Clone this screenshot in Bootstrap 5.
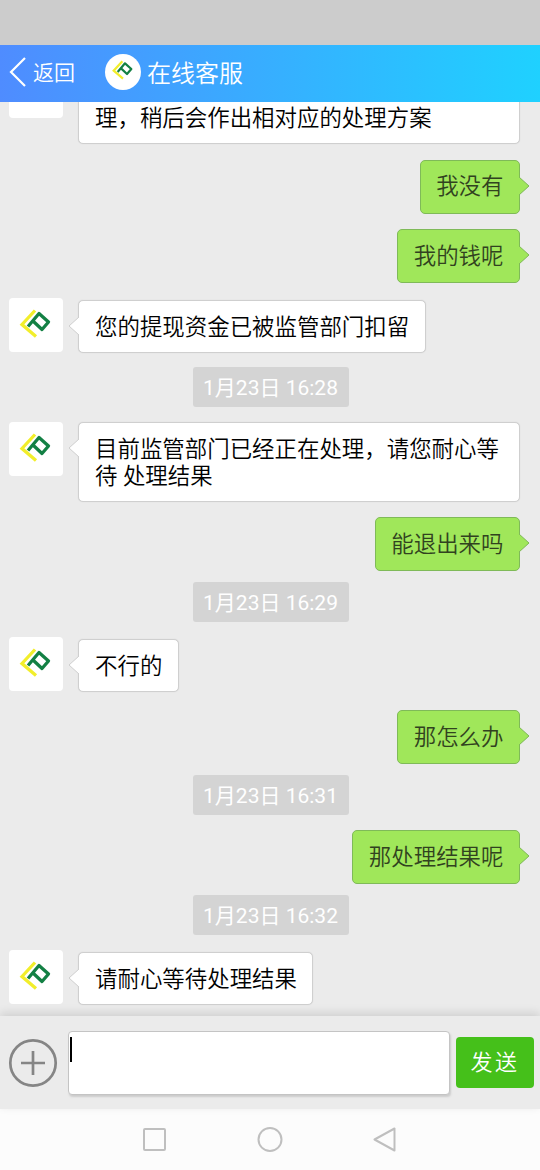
<!DOCTYPE html>
<html lang="zh-CN">
<head>
<meta charset="utf-8">
<meta name="viewport" content="width=device-width, initial-scale=1">
<title>在线客服</title>
<link href="https://cdn.jsdelivr.net/npm/bootstrap@5.3.0/dist/css/bootstrap.min.css" rel="stylesheet">
<style>
body{font-family:Roboto,"Noto Sans CJK SC",sans-serif;font-size:22.45px;font-weight:350;line-height:27px;background:#ebebeb;color:#000}
.status-strip{height:45px;background:#ccc}
.chat-head{height:57px;background:linear-gradient(90deg,#4f8cff,#1fd1ff);color:#fff;padding-left:9px}
.chat-head .back-arrow{margin-top:-3px}
.chat-head .back-label{font-size:21px;margin-left:7px}
.chat-head .head-logo{width:36px;height:36px;margin:-3px 0 0 30px}
.chat-head .head-title{font-size:24px;margin:1px 0 0 6px}
.chat-log{padding:0 20px 10.9px 9px;min-height:0}
.msg{flex:none}
.avatar{width:54px;height:54px;margin:-2.5px 15px -1px 0;border-radius:4px;background:#fff;flex:none}
.two-line .avatar{margin-top:-.5px}
.first .avatar{margin-top:-27.5px}
.bubble{position:relative;padding:12.5px 16px 11.5px;border:1px solid #cfcfcf;border-radius:5px;background:#fff;box-shadow:0 0 1px #ccc}
.theirs .bubble{padding-right:15.5px}
.mine .bubble{padding:12.8px 15.5px 12.2px;background:#a0e75a;border-color:#7fba58;color:#31421f;box-shadow:none}
.tail{position:absolute;top:15px;width:12px;height:20px}
.theirs .tail{left:-11px}
.mine .tail{right:-11px}
.stamp{flex:none;width:156px;height:40px;background:#d4d4d4;color:#fff;border-radius:3px;font-size:21px;font-weight:400;margin-left:12px;padding-top:3px}
.msg.mine{margin-top:15.2px}
.msg.theirs{margin-top:17.5px}
.stamp + .theirs.two-line{margin-top:15.5px}
.short + .mine{margin-top:18px}
.theirs + .stamp{margin-top:13.5px}
.mine + .stamp{margin-top:10.5px}
.composer{position:relative;height:93px;padding:0 6px 0 8px;box-shadow:0 -3px 9px rgba(0,0,0,.12);background:#ebebeb}
.entry{height:64px;margin:1px 6px 0 10px;padding:5px 1px;border:1px solid #c4c4c4;border-radius:4px;background:#fff;box-shadow:1px 2px 2px #ccc}
.caret{width:2px;height:25px;background:#000}
.send,.send:hover{width:78px;height:51px;background:#45c01a;color:#fff;font-size:22px;font-weight:350;letter-spacing:2.5px;border-radius:4px;padding:0;border:0}
.sys-nav{height:61px;background:#fcfcfc}
</style>
</head>
<body>
<svg class="d-none" xmlns="http://www.w3.org/2000/svg">
  <symbol id="logo" viewBox="0 0 54 54"><path d="M26 12.500 13 26.500 27 38.500" fill="none" stroke="#f2ee2b" stroke-width="3.300"/><path d="M19 28.500 30 15.500 39.500 24 33 31.500 24.500 23.500" fill="none" stroke="#138044" stroke-width="3.300" stroke-linejoin="round"/></symbol>
  <symbol id="tail-l" viewBox="0 0 12 20"><path d="M12 0 1 10 12 20Z" fill="#fff"/><path d="M11 1 1 10 11 19" fill="none" stroke="#cfcfcf"/></symbol>
  <symbol id="tail-r" viewBox="0 0 12 20"><path d="M0 0 11 10 0 20Z" fill="#a0e75a"/><path d="M1 1 11 10 1 19" fill="none" stroke="#7fba58"/></symbol>
</svg>
<div class="d-flex flex-column vh-100 overflow-hidden">
  <div class="status-strip flex-shrink-0"></div>
  <header class="chat-head d-flex align-items-center flex-shrink-0 position-relative z-1">
    <svg class="back-arrow" width="17" height="30" viewBox="0 0 17 30"><path d="M16 1 2 15 16 29" fill="none" stroke="#fff" stroke-width="2.200"/></svg>
    <span class="back-label">返回</span>
    <span class="head-logo rounded-circle bg-white d-flex align-items-center justify-content-center"><svg width="36" height="36" viewBox="0 1 36 36"><use href="#logo" width="36" height="36"/></svg></span>
    <span class="head-title">在线客服</span>
  </header>
  <main class="chat-log flex-fill d-flex flex-column justify-content-end overflow-hidden">
    <div class="msg theirs first d-flex"><div class="avatar"></div><div class="bubble flex-fill">理，稍后会作出相对应的处理方案</div></div>
    <div class="msg mine d-flex justify-content-end"><div class="bubble">我没有<svg class="tail"><use href="#tail-r"/></svg></div></div>
    <div class="msg mine d-flex justify-content-end"><div class="bubble">我的钱呢<svg class="tail"><use href="#tail-r"/></svg></div></div>
    <div class="msg theirs d-flex"><div class="avatar"><svg class="d-block" width="54" height="54"><use href="#logo"/></svg></div><div class="bubble">您的提现资金已被监管部门扣留<svg class="tail"><use href="#tail-l"/></svg></div></div>
    <div class="stamp d-flex align-items-center justify-content-center align-self-center">1月23日 16:28</div>
    <div class="msg theirs two-line d-flex"><div class="avatar"><svg class="d-block" width="54" height="54"><use href="#logo"/></svg></div><div class="bubble flex-fill">目前监管部门已经正在处理，请您耐心等<br>待 处理结果<svg class="tail"><use href="#tail-l"/></svg></div></div>
    <div class="msg mine d-flex justify-content-end"><div class="bubble">能退出来吗<svg class="tail"><use href="#tail-r"/></svg></div></div>
    <div class="stamp d-flex align-items-center justify-content-center align-self-center">1月23日 16:29</div>
    <div class="msg theirs short d-flex"><div class="avatar"><svg class="d-block" width="54" height="54"><use href="#logo"/></svg></div><div class="bubble">不行的<svg class="tail"><use href="#tail-l"/></svg></div></div>
    <div class="msg mine d-flex justify-content-end"><div class="bubble">那怎么办<svg class="tail"><use href="#tail-r"/></svg></div></div>
    <div class="stamp d-flex align-items-center justify-content-center align-self-center">1月23日 16:31</div>
    <div class="msg mine d-flex justify-content-end"><div class="bubble">那处理结果呢<svg class="tail"><use href="#tail-r"/></svg></div></div>
    <div class="stamp d-flex align-items-center justify-content-center align-self-center">1月23日 16:32</div>
    <div class="msg theirs d-flex"><div class="avatar"><svg class="d-block" width="54" height="54"><use href="#logo"/></svg></div><div class="bubble">请耐心等待处理结果<svg class="tail"><use href="#tail-l"/></svg></div></div>
  </main>
  <div class="composer d-flex align-items-center flex-shrink-0">
    <svg class="flex-shrink-0" width="50" height="50" viewBox="0 0 50 50" fill="none" stroke="#858585" stroke-width="2.700"><circle cx="25" cy="25" r="22.700"/><path d="M13 25H37M25 13V37"/></svg>
    <div class="entry flex-fill"><div class="caret"></div></div>
    <button class="send btn" type="button">发送</button>
  </div>
  <nav class="sys-nav d-flex align-items-center justify-content-center flex-shrink-0" aria-label="系统导航">
    <svg width="256" height="30" viewBox="0 0 256 30" fill="none" stroke="#bfbfbf" stroke-width="2"><rect x="2" y="4" width="21" height="21" rx="1"/><circle cx="128" cy="14.500" r="11.500"/><path d="M252.500 3.500V25.500L232.500 14.500Z" stroke-linejoin="round"/></svg>
  </nav>
</div>
<script src="https://cdn.jsdelivr.net/npm/bootstrap@5.3.0/dist/js/bootstrap.bundle.min.js"></script>
</body>
</html>
